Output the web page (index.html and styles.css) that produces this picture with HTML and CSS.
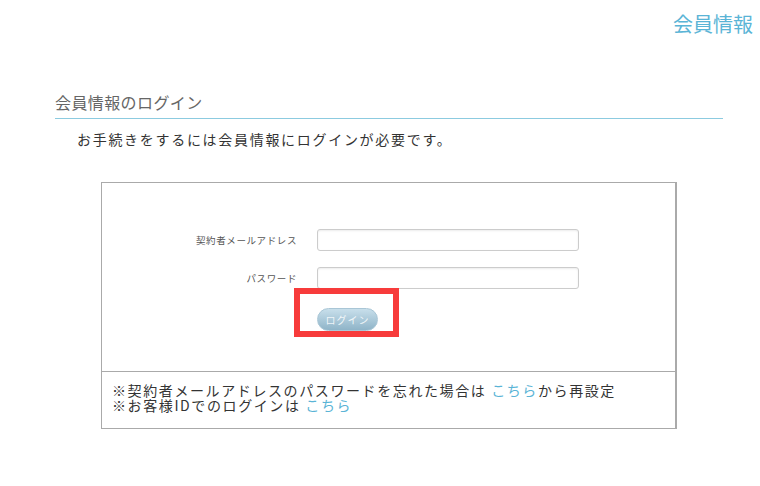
FILE: index.html
```html
<!DOCTYPE html>
<html lang="ja">
<head>
    <meta charset="UTF-8">
    <meta name="viewport" content="width=device-width, initial-scale=1.0">
    <title>会員情報のログイン</title>
    <link rel="stylesheet" href="styles.css">
</head>
<body>
    <div class="header">会員情報</div>

    <div class="section">
        <h2 class="section-title">会員情報のログイン</h2>
        <p class="lead">お手続きをするには会員情報にログインが必要です。</p>
    </div>

    <div class="login-box">
        <form class="login-form">
            <label for="email">契約者メールアドレス</label>
            <input type="text" id="email">

            <label for="password">パスワード</label>
            <input type="password" id="password">

            <div class="btn-wrap">
                <button type="submit">ログイン</button>
                <span class="highlight"></span>
            </div>
        </form>
        <div class="login-note">
            <p>※契約者メールアドレスのパスワードを忘れた場合は <a href="#">こちら</a>から再設定</p>
            <p>※お客様IDでのログインは <a href="#">こちら</a></p>
        </div>
    </div>
</body>
</html>
```

FILE: styles.css
```css
body {
    margin: 0;
    font-family: "Noto Sans CJK JP", "Noto Sans", sans-serif;
    color: #333;
    background: #fff;
}

.header {
    padding: 10px 7px 0 0;
    text-align: right;
    font-size: 20px;
    line-height: 28px;
    color: #5ab4d6;
}

.section {
    margin: 0 37px 0 55px;
}

.section-title {
    margin: 54px 0 0;
    padding-bottom: 6px;
    border-bottom: 1px solid #8ccbe0;
    font-size: 16px;
    font-weight: normal;
    line-height: 20px;
    letter-spacing: 0.4px;
    color: #666;
}

.lead {
    margin: 11px 0 0;
    padding-left: 22px;
    font-size: 14px;
    line-height: 18px;
    letter-spacing: 1.7px;
}

.login-box {
    margin: 34px 0 0 101px;
    width: 573px;
    border: 1px solid #aaa;
    border-right-width: 2px;
}

.login-form {
    display: grid;
    grid-template-columns: 195px 262px;
    grid-auto-rows: 22px;
    column-gap: 20px;
    row-gap: 16px;
    height: 188px;
    box-sizing: border-box;
    padding-top: 46px;
}

.login-form label {
    align-self: center;
    text-align: right;
    font-size: 9.5px;
    letter-spacing: 0.6px;
    color: #555;
}

.login-form input {
    height: 22px;
    box-sizing: border-box;
    margin: 0;
    border: 1px solid #ccc;
    border-radius: 3px;
    box-shadow: inset 0 1px 2px rgba(0,0,0,0.08);
}

.btn-wrap {
    grid-column: 2;
    position: relative;
    height: 23px;
}

.btn-wrap button {
    width: 61px;
    height: 23px;
    padding: 0;
    border: 1px solid #a9c6d6;
    border-radius: 12px;
    background: linear-gradient(#c8dfeb, #8fb4c8);
    color: rgba(255,255,255,0.85);
    font-family: inherit;
    font-size: 10px;
    letter-spacing: 1px;
}

.highlight {
    position: absolute;
    left: -23px;
    top: -17px;
    width: 105px;
    height: 49px;
    box-sizing: border-box;
    border: 6px solid #f73b3b;
}

.login-note {
    border-top: 1px solid #aaa;
    padding: 11px 10px 15px;
    font-size: 14px;
    line-height: 15px;
    letter-spacing: 1.6px;
}

.login-note p {
    margin: 0;
}

.login-note a {
    color: #5ab4d6;
    text-decoration: none;
}
```
